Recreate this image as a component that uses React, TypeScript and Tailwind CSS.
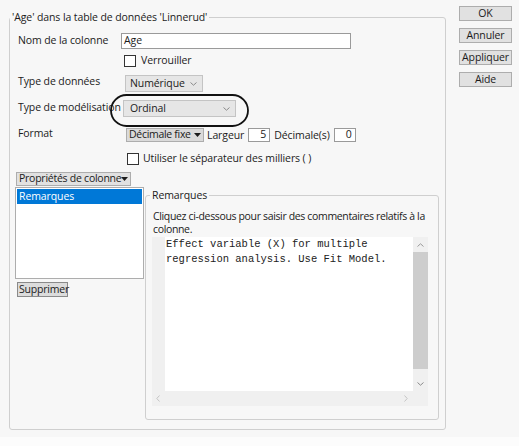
import React from "react";

function Chevron() {
  return (
    <svg width="7" height="4" viewBox="0 0 7 4" className="shrink-0">
      <polyline points="0.5,0.5 3.5,3.2 6.5,0.5" fill="none" stroke="#8a8a8a" strokeWidth="1" />
    </svg>
  );
}

function Caret() {
  return (
    <svg width="7" height="4" viewBox="0 0 7 4" className="shrink-0">
      <polygon points="0,0 7,0 3.5,4" fill="#1b1b1b" />
    </svg>
  );
}

function Checkbox() {
  return <div className="w-[12px] h-[12px] shrink-0 border border-[#333333] bg-white" />;
}

function SideButton({ label }: { label: string }) {
  return (
    <div className="w-[53px] h-[15px] flex items-center justify-center border border-[#adadad] bg-[#e1e1e1] leading-none">
      {label}
    </div>
  );
}

export default function App() {
  return (
    <div className="w-[519px] h-[446px] bg-[#f7f7f7] flex flex-col font-['Open_Sans',sans-serif] text-[10.5px] tracking-[-0.1px] text-[#1b1b1b] whitespace-nowrap overflow-hidden">
      <div className="flex items-start h-[437px]">
        <fieldset className="ml-[9px] mt-[10px] w-[437px] min-w-0 h-[420px] shrink-0 border border-[#cfcfcf] rounded-[3px]">
          <legend className="px-[2px] leading-[14px]">'Age' dans la table de données 'Linnerud'</legend>

          {/* Nom de la colonne */}
          <div className="mt-[9px] ml-[8px] flex items-center h-[16px]">
            <div className="w-[103px] shrink-0">Nom de la colonne</div>
            <div className="w-[230px] h-[16px] border border-[#9a9a9a] bg-white pl-[2px] flex items-center">Age</div>
          </div>

          <div className="mt-[6px] ml-[8px] flex items-center h-[12px]">
            <div className="w-[106px] shrink-0" />
            <Checkbox />
            <span className="ml-[5px]">Verrouiller</span>
          </div>

          {/* Type de données */}
          <div className="mt-[8px] ml-[8px] flex items-start h-[17px]">
            <div className="w-[107px] shrink-0 leading-[12px]">Type de données</div>
            <div className="w-[78px] h-[17px] border border-[#c4c4c4] bg-[#e6e6e6] flex items-center justify-between pl-[4px] pr-[5px]">
              <span>Numérique</span>
              <Chevron />
            </div>
          </div>

          {/* Type de modélisation */}
          <div className="mt-[8px] ml-[8px] flex items-start h-[17px]">
            <div className="w-[105px] shrink-0 leading-[14px]">Type de modélisation</div>
            <div className="relative">
              <div className="w-[113px] h-[17px] border border-[#c4c4c4] bg-[#e6e6e6] flex items-center justify-between pl-[6px] pr-[5px]">
                <span>Ordinal</span>
                <Chevron />
              </div>
              <svg
                width="139"
                height="33"
                viewBox="0 0 139 33"
                className="absolute left-[-13px] top-[-6px] pointer-events-none"
              >
                <rect x="1" y="1" width="137" height="31" rx="15.5" ry="15.5" fill="none" stroke="#111111" strokeWidth="1.8" />
              </svg>
            </div>
          </div>

          {/* Format */}
          <div className="mt-[11px] ml-[8px] flex items-start h-[14px]">
            <div className="w-[108px] shrink-0 leading-[10px]">Format</div>
            <div className="w-[78px] h-[14px] border border-[#adadad] bg-[#dadada] flex items-center justify-between pl-[2px] pr-[2px] tracking-[-0.3px]">
              <span>Décimale fixe</span>
              <Caret />
            </div>
            <span className="ml-[3px] leading-[14px]">Largeur</span>
            <div className="ml-[4px] w-[22px] h-[14px] border border-[#9a9a9a] bg-white flex items-center justify-end pr-[3px]">5</div>
            <span className="ml-[4px] leading-[14px]">Décimale(s)</span>
            <div className="ml-[4px] w-[22px] h-[14px] border border-[#9a9a9a] bg-white flex items-center justify-end pr-[3px]">0</div>
          </div>

          <div className="mt-[11px] ml-[8px] flex items-center h-[12px]">
            <div className="w-[109px] shrink-0" />
            <Checkbox />
            <span className="ml-[4px]">Utiliser le séparateur des milliers ( )</span>
          </div>

          {/* Propriétés de colonne */}
          <div className="mt-[7px] ml-[6px] w-[115px] h-[14px] border border-[#adadad] bg-[#e1e1e1] flex items-center justify-between pl-[2px] pr-[3px] tracking-[-0.25px]">
            <span>Propriétés de colonne</span>
            <Caret />
          </div>

          <div className="mt-[1px] ml-[5px] flex items-start">
            <div className="w-[130px] shrink-0">
              <div className="w-[129px] h-[92px] border border-[#adadad] bg-white p-[1px]">
                <div className="h-[15px] bg-[#0078d7] text-white pl-[2px] flex items-center">Remarques</div>
              </div>
              <div className="mt-[3px] ml-[2px] w-[51px] h-[15px] border border-[#8a8a8a] bg-[#dcdcdc] flex items-center pl-[1px] tracking-[-0.2px]">
                Supprimer
              </div>
            </div>

            <fieldset className="mt-[1px] w-[294px] min-w-0 shrink-0 h-[232px] border border-[#cfcfcf] rounded-[3px]">
              <legend className="ml-[4px] px-[2px] leading-[14px]">Remarques</legend>
              <div className="mt-[8px] pl-[7px] leading-[13px] tracking-[-0.35px]">
                Cliquez ci-dessous pour saisir des commentaires relatifs à la
                <br />
                colonne.
              </div>
              <div className="mt-[1px] ml-[6px] w-[276px] h-[169px] bg-[#f0f0f0] flex flex-col">
                <div className="flex h-[154px]">
                  <div className="w-[13px] shrink-0" />
                  <div className="w-[248px] bg-white pl-[1px] font-['Liberation_Mono',monospace] text-[10.5px] tracking-normal leading-[15px] text-[#222222]">
                    <div>Effect variable (X) for multiple</div>
                    <div>regression analysis. Use Fit Model.</div>
                  </div>
                  <div className="w-[15px] flex flex-col items-center">
                    <div className="h-[15px] flex items-center justify-center">
                      <svg width="7" height="4" viewBox="0 0 7 4">
                        <polyline points="0.5,3.5 3.5,0.8 6.5,3.5" fill="none" stroke="#9a9a9a" strokeWidth="1" />
                      </svg>
                    </div>
                    <div className="w-[15px] h-[117px] bg-[#cdcdcd]" />
                    <div className="flex-1" />
                    <div className="h-[15px] flex items-center justify-center">
                      <Chevron />
                    </div>
                  </div>
                </div>
                <div className="h-[15px] flex items-center">
                  <div className="ml-[4px] w-[276px] flex items-center">
                    <svg width="4" height="7" viewBox="0 0 4 7">
                      <polyline points="3.5,0.5 0.8,3.5 3.5,6.5" fill="none" stroke="#c4c4c4" strokeWidth="1" />
                    </svg>
                    <div className="w-[244px]" />
                    <svg width="4" height="7" viewBox="0 0 4 7">
                      <polyline points="0.5,0.5 3.2,3.5 0.5,6.5" fill="none" stroke="#c4c4c4" strokeWidth="1" />
                    </svg>
                  </div>
                </div>
              </div>
            </fieldset>
          </div>
        </fieldset>

        <div className="ml-[13px] mt-[6px] flex flex-col gap-[7px]">
          <SideButton label="OK" />
          <SideButton label="Annuler" />
          <SideButton label="Appliquer" />
          <SideButton label="Aide" />
        </div>
      </div>
      <div className="flex-1 bg-[#fcfcfc]" />
    </div>
  );
}
